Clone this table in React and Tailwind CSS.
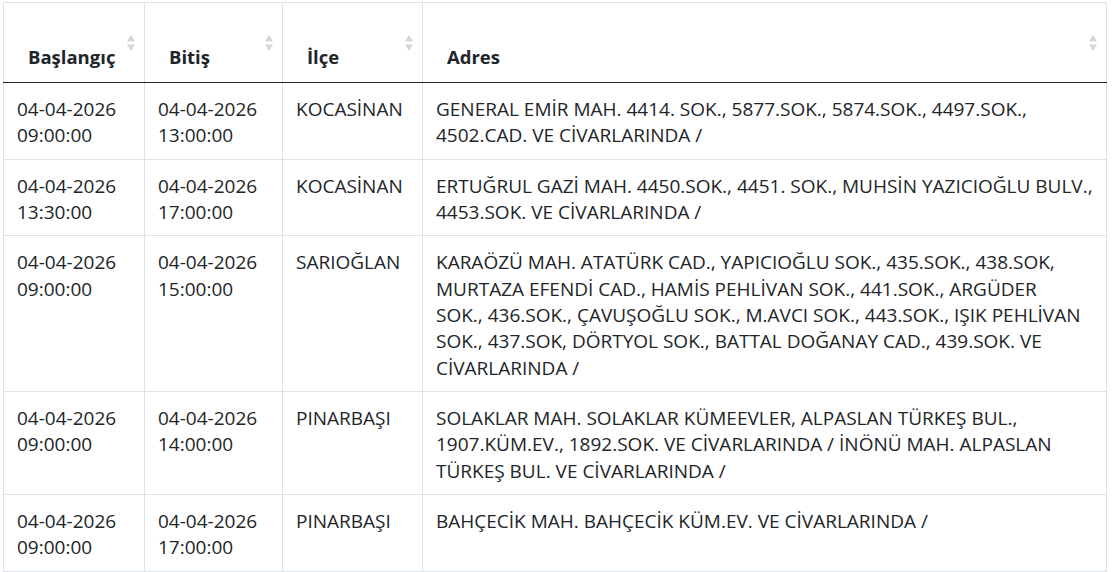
import React from "react";

const rows = [
  {
    start: ["04-04-2026", "09:00:00"],
    end: ["04-04-2026", "13:00:00"],
    ilce: "KOCASİNAN",
    adres: [
      "GENERAL EMİR MAH. 4414. SOK., 5877.SOK., 5874.SOK., 4497.SOK.,",
      "4502.CAD. VE CİVARLARINDA /",
    ],
  },
  {
    start: ["04-04-2026", "13:30:00"],
    end: ["04-04-2026", "17:00:00"],
    ilce: "KOCASİNAN",
    adres: [
      "ERTUĞRUL GAZİ MAH. 4450.SOK., 4451. SOK., MUHSİN YAZICIOĞLU BULV.,",
      "4453.SOK. VE CİVARLARINDA /",
    ],
  },
  {
    start: ["04-04-2026", "09:00:00"],
    end: ["04-04-2026", "15:00:00"],
    ilce: "SARIOĞLAN",
    adres: [
      "KARAÖZÜ MAH. ATATÜRK CAD., YAPICIOĞLU SOK., 435.SOK., 438.SOK,",
      "MURTAZA EFENDİ CAD., HAMİS PEHLİVAN SOK., 441.SOK., ARGÜDER",
      "SOK., 436.SOK., ÇAVUŞOĞLU SOK., M.AVCI SOK., 443.SOK., IŞIK PEHLİVAN",
      "SOK., 437.SOK, DÖRTYOL SOK., BATTAL DOĞANAY CAD., 439.SOK. VE",
      "CİVARLARINDA /",
    ],
  },
  {
    start: ["04-04-2026", "09:00:00"],
    end: ["04-04-2026", "14:00:00"],
    ilce: "PINARBAŞI",
    adres: [
      "SOLAKLAR MAH. SOLAKLAR KÜMEEVLER, ALPASLAN TÜRKEŞ BUL.,",
      "1907.KÜM.EV., 1892.SOK. VE CİVARLARINDA / İNÖNÜ MAH. ALPASLAN",
      "TÜRKEŞ BUL. VE CİVARLARINDA /",
    ],
  },
  {
    start: ["04-04-2026", "09:00:00"],
    end: ["04-04-2026", "17:00:00"],
    ilce: "PINARBAŞI",
    adres: ["BAHÇECİK MAH. BAHÇECİK KÜM.EV. VE CİVARLARINDA /"],
  },
];

function SortIcon() {
  return (
    <svg width="10" height="18" viewBox="0 0 10 18" className="absolute right-[8px] top-[31px]">
      <path d="M5 1 L9 7.5 L1 7.5 Z" fill="#d6d6d6" />
      <path d="M5 17 L9 10.5 L1 10.5 Z" fill="#d6d6d6" />
    </svg>
  );
}

function Lines({ items }) {
  return items.map((t, i) => (
    <div key={i} className="whitespace-nowrap">
      {t}
    </div>
  ));
}

export default function App() {
  const headers = [
    { label: "Başlangıç", w: "w-[141px]" },
    { label: "Bitiş", w: "w-[138px]" },
    { label: "İlçe", w: "w-[140px]" },
    { label: "Adres", w: "w-[684px]" },
  ];

  return (
    <div
      className="w-[1113px] h-[572px] overflow-hidden bg-white pt-[2px] pl-[3px]"
      style={{ fontFamily: '"Open Sans", "Noto Sans", sans-serif' }}
    >
      <table className="table-fixed border-collapse w-[1104px] text-[19px] leading-[26.35px] text-[#212529]">
        <thead>
          <tr>
            {headers.map((h) => (
              <th
                key={h.label}
                className={`${h.w} relative h-[80px] align-bottom text-left font-bold text-[18.5px] border border-[#dee2e6] border-b-[#212529] pl-[24px] pb-[12px]`}
              >
                {h.label}
                <SortIcon />
              </th>
            ))}
          </tr>
        </thead>
        <tbody className="font-normal">
          {rows.map((r, i) => (
            <tr key={i}>
              <td className="align-top border border-[#dee2e6] pl-[13px] pt-[13px] pb-[10px]">
                <Lines items={r.start} />
              </td>
              <td className="align-top border border-[#dee2e6] pl-[13px] pt-[13px] pb-[10px]">
                <Lines items={r.end} />
              </td>
              <td className="align-top border border-[#dee2e6] pl-[13px] pt-[13px] pb-[10px]">
                {r.ilce}
              </td>
              <td className="align-top border border-[#dee2e6] pl-[13px] pt-[13px] pb-[10px]">
                <Lines items={r.adres} />
              </td>
            </tr>
          ))}
          <tr>
            <td colSpan={4} className="border-t border-t-[#212529] h-[20px]"></td>
          </tr>
        </tbody>
      </table>
    </div>
  );
}
